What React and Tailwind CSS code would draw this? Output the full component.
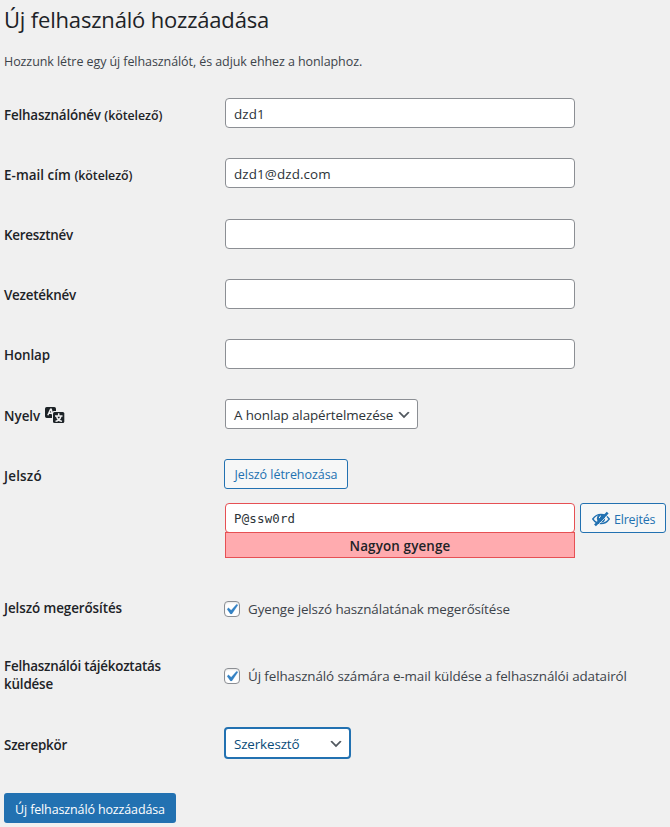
function Row({ label, height = "h-[60px]", labelPad = "pt-[23px]", children }) {
  return (
    <div className={`flex ${height}`}>
      <div className={`w-[220px] shrink-0 text-[13.4px] font-semibold leading-[18px] text-[#1d2327] ${labelPad}`}>
        {label}
      </div>
      <div className="min-w-0 flex-1">{children}</div>
    </div>
  );
}

function TextField({ id, value = "", pad = "pt-[15px]" }) {
  return (
    <div className={`${pad} pl-px`}>
      <input
        id={id}
        type="text"
        defaultValue={value}
        className="block h-[30px] w-[350px] rounded-[4px] border border-[#8c8f94] bg-white px-2 pt-px text-[13.4px] tracking-[0.12px] text-[#2c3338] outline-none"
      />
    </div>
  );
}

function Chevron({ className }) {
  return (
    <svg viewBox="0 0 20 20" className={`mt-px size-4 shrink-0 ${className}`} fill="#50575e">
      <path d="M5 6l5 5 5-5 2 1-7 7-7-7 2-1z" />
    </svg>
  );
}

function Checkbox({ children, tracking }) {
  return (
    <label className="flex items-center">
      <span className="flex size-4 shrink-0 items-center justify-center rounded-[4px] border border-[#8c8f94] bg-white shadow-[inset_0_1px_2px_rgba(0,0,0,0.1)]">
        <svg viewBox="0 0 20 20" className="mr-px size-[21px] shrink-0" fill="#3582c4" stroke="#3582c4" strokeWidth="0.2">
          <path d="M14.83 4.89l1.34.94-5.81 8.38H9.02L5.78 9.67l1.34-1.25 2.57 2.4z" />
        </svg>
      </span>
      <span className={`ml-2 whitespace-nowrap text-[13.4px] leading-[18px] text-[#3c434a] ${tracking}`}>{children}</span>
    </label>
  );
}

function TranslationIcon() {
  return (
    <svg viewBox="0 0 20 17" className="ml-[5px] mt-px h-[17px] w-5 shrink-0">
      <path fill="#1d2327" d="M1.700 0h7.600Q11 0 11 1.700V4H9Q7 4 7 6v5H1.700Q0 11 0 9.300V1.700Q0 0 1.700 0z" />
      <path stroke="#f0f0f1" strokeWidth="1.500" fill="none" d="M2.800 8.300L5.600 2.200h.6L7.500 7.500M4.200 6.200h3" />
      <rect x="8" y="5" width="11.300" height="11" rx="1.500" fill="#1d2327" />
      <path stroke="#f0f0f1" strokeWidth="1.500" fill="none" d="M13.700 6.300v2.500M10 8.900h7.500M15.900 9.200q-1 4-5.400 5.200M11.600 9.200q1 4 5.400 5.200" />
    </svg>
  );
}

function HiddenIcon() {
  return (
    <svg viewBox="0 0 20 20" className="mt-px size-5 shrink-0">
      <path d="M1.800 10Q5 5.400 10 5.400T18.200 10Q15 14.600 10 14.600T1.800 10z" fill="#f6f7f7" stroke="#2271b1" strokeWidth="1.400" />
      <circle cx="10" cy="9.500" r="4.100" fill="#2271b1" />
      <path d="M10 6.800q-1.700.6-1.700 2.300" stroke="#f6f7f7" strokeWidth="1" fill="none" />
      <path d="M5.800 17.200L18.200 4.800" stroke="#f6f7f7" strokeWidth="0.800" />
      <path d="M4 16.300L16.700 3.600" stroke="#2271b1" strokeWidth="2.600" />
    </svg>
  );
}

export default function App() {
  return (
    <main className="h-[827px] w-[670px] overflow-hidden bg-[#f0f0f0] pl-1 font-['Open_Sans','Noto_Sans',sans-serif]">
      <h1 className="pt-1 text-[22px] leading-[30px] tracking-[-0.18px] text-[#1d2327]">Új felhasználó hozzáadása</h1>
      <p className="mt-[18px] text-[12.5px] leading-[19px] tracking-[-0.08px] text-[#3c434a]">
        Hozzunk létre egy új felhasználót, és adjuk ehhez a honlaphoz.
      </p>
      <form className="pt-3">
        <Row
          label={<><span className="tracking-[-0.18px]">Felhasználónév</span> <span className="text-[12.4px] tracking-[-0.07px]">(kötelező)</span></>}
        >
          <TextField id="username" value="dzd1" />
        </Row>
        <Row
          height="h-[61px]"
          label={<><span className="tracking-[0.05px]">E-mail cím</span> <span className="text-[12.4px] tracking-[-0.07px]">(kötelező)</span></>}
        >
          <TextField id="email" value="dzd1@dzd.com" />
        </Row>
        <Row labelPad="pt-[22px]" label={<span className="tracking-[-0.24px]">Keresztnév</span>}>
          <TextField id="first-name" />
        </Row>
        <Row labelPad="pt-[22px]" label={<span className="tracking-[-0.23px]">Vezetéknév</span>}>
          <TextField id="last-name" />
        </Row>
        <Row labelPad="pt-[22px]" label={<span className="tracking-[-0.1px]">Honlap</span>}>
          <TextField id="website" />
        </Row>
        <Row labelPad="pt-[22px]" label={<span className="flex items-start"><span className="pt-px">Nyelv</span><TranslationIcon /></span>}>
          <div className="pl-px pt-[15px]">
            <div className="flex h-[30px] w-[193px] items-center rounded-[3px] border border-[#8c8f94] bg-white pl-2 text-[13.4px] tracking-[-0.1px] text-[#2c3338]">
              <span className="flex-1 whitespace-nowrap pt-[2px]">A honlap alapértelmezése</span>
              <Chevron className="mr-[5px]" />
            </div>
          </div>
        </Row>
        <Row height="h-[134px]" label={<span className="tracking-[0.2px]">Jelszó</span>}>
          <div className="pt-[15px]">
            <button type="button" className="flex h-[30px] w-[124px] items-center justify-center whitespace-nowrap rounded-[3px] border border-[#2271b1] bg-[#f6f7f7] text-[12.5px] tracking-[-0.04px] text-[#2271b1]">
              <span className="pt-[3px]">Jelszó létrehozása</span>
            </button>
            <div className="mt-[14px] flex items-start gap-[5px] pl-px">
              <div className="w-[350px]">
                <input
                  type="text"
                  defaultValue="P@ssw0rd"
                  className="block h-[30px] w-full rounded-[4px] border border-[#e65054] bg-white px-2 font-['DejaVu_Sans_Mono',monospace] text-[12.4px] tracking-[0.2px] text-[#2c3338] outline-none"
                />
                <div className="-mt-px h-[26px] border border-[#e65054] bg-[#ffabaf] pt-px text-center text-[13.4px] font-semibold leading-[24px] tracking-[0.15px] text-[#1d2327]">
                  Nagyon gyenge
                </div>
              </div>
              <button type="button" className="flex h-[30px] w-[86px] items-center rounded-[3px] border border-[#2271b1] bg-[#f6f7f7] pl-[10px] text-[12.5px] tracking-[-0.2px] text-[#2271b1]">
                <HiddenIcon />
                <span className="ml-[3px] pt-1">Elrejtés</span>
              </button>
            </div>
          </div>
        </Row>
        <Row height="h-[59px]" labelPad="pt-[21px]" label={<span className="tracking-[-0.08px]">Jelszó megerősítés</span>}>
          <div className="pt-[22px]">
            <Checkbox tracking="tracking-[-0.11px]">Gyenge jelszó használatának megerősítése</Checkbox>
          </div>
        </Row>
        <Row
          height="h-[76px]"
          labelPad="pt-[20px]"
          label={<><div className="tracking-[-0.23px]">Felhasználói tájékoztatás</div><div className="tracking-[-0.17px]">küldése</div></>}
        >
          <div className="pt-[30px]">
            <Checkbox tracking="tracking-[-0.1px]">Új felhasználó számára e-mail küldése a felhasználói adatairól</Checkbox>
          </div>
        </Row>
        <Row height="h-[80px]" label={<span className="tracking-[-0.22px]">Szerepkör</span>}>
          <div className="pt-[14px]">
            <div className="flex h-8 w-[127px] items-center rounded-[4px] border-2 border-[#2271b1] bg-white pl-2 text-[13.4px] tracking-[-0.13px] text-[#0a4b78]">
              <span className="flex-1 pt-[2px]">Szerkesztő</span>
              <Chevron className="mr-[5px]" />
            </div>
          </div>
        </Row>
        <button type="button" className="flex h-[30px] w-[172px] items-center whitespace-nowrap rounded-[3px] bg-[#2271b1] pl-[11px] pt-[4px] text-[12.5px] tracking-[-0.13px] text-white">
          Új felhasználó hozzáadása
        </button>
      </form>
    </main>
  );
}
